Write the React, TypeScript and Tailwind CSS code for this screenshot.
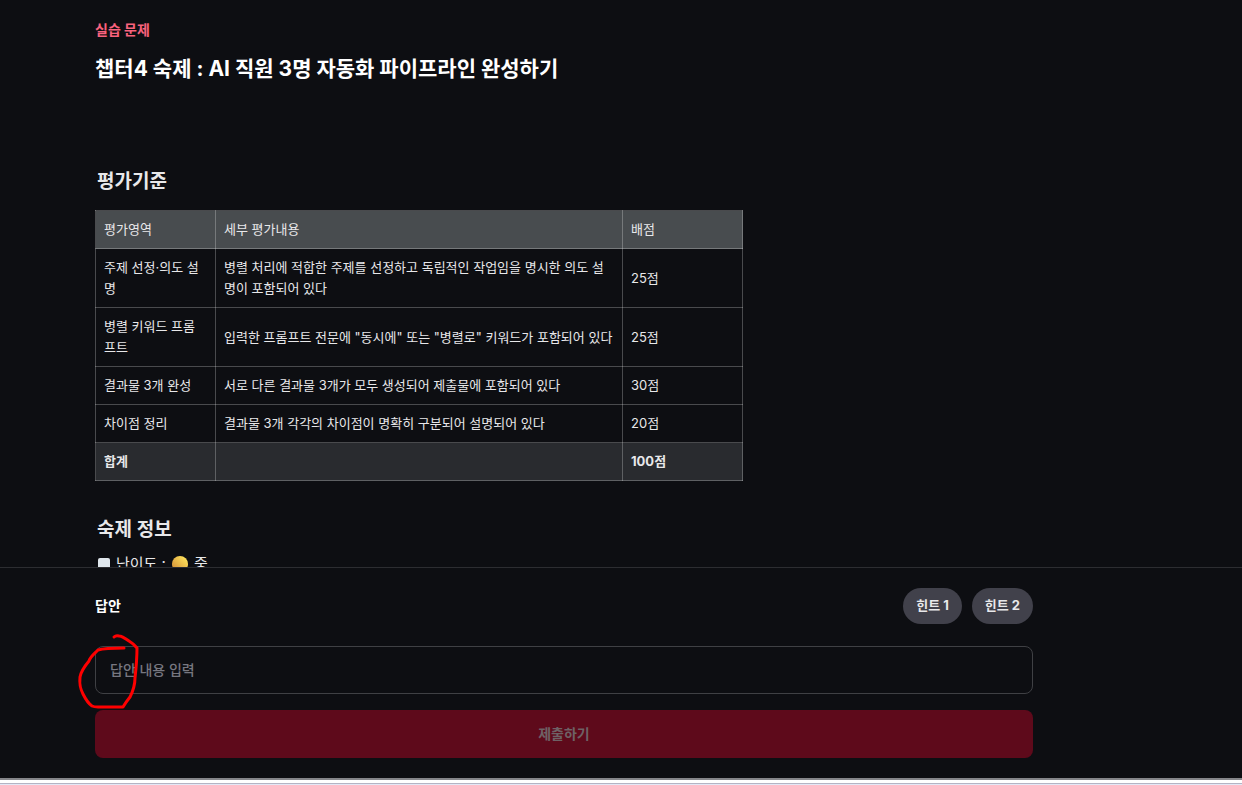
const criteria = [
  { area: "주제 선정·의도 설명", detail: "병렬 처리에 적합한 주제를 선정하고 독립적인 작업임을 명시한 의도 설명이 포함되어 있다", score: "25점" },
  { area: "병렬 키워드 프롬프트", detail: "입력한 프롬프트 전문에 \"동시에\" 또는 \"병렬로\" 키워드가 포함되어 있다", score: "25점" },
  { area: "결과물 3개 완성", detail: "서로 다른 결과물 3개가 모두 생성되어 제출물에 포함되어 있다", score: "30점" },
  { area: "차이점 정리", detail: "결과물 3개 각각의 차이점이 명확히 구분되어 설명되어 있다", score: "20점" },
];

const areaCell = "border border-white/25 py-2 pl-2 pr-3 text-left font-normal break-all";
const cell = "border border-white/25 p-2 text-left font-normal break-all";

const SquareIcon = () => (
  <svg className="w-3 h-4 shrink-0" viewBox="0 0 12 16" aria-hidden="true">
    <rect x="0" y="2" width="12" height="12" rx="2" fill="#dfe6ec" />
  </svg>
);

const YellowCircle = () => (
  <svg className="size-4 shrink-0" viewBox="0 0 16 16" aria-hidden="true">
    <defs>
      <linearGradient id="ball" x1="1" y1="0" x2="0" y2="1">
        <stop offset="0.1" stopColor="#ffe45c" />
        <stop offset="0.8" stopColor="#d99a3c" />
      </linearGradient>
    </defs>
    <circle cx="8" cy="8" r="8" fill="url(#ball)" />
  </svg>
);

const Problem = () => (
  <section className="flex-1 min-h-0 overflow-hidden pl-[95px] pr-5 pt-5">
    <p className="text-sm font-bold text-[#f9627d]">실습 문제</p>
    <h1 className="mt-3 text-[21px] leading-[34px] font-bold text-white">챕터4 숙제 : AI 직원 3명 자동화 파이프라인 완성하기</h1>

    <h2 className="mt-20 ml-0.5 text-[19px] leading-8 font-semibold">평가기준</h2>
    <table className="mt-3 w-full max-w-[648px] table-fixed border-collapse text-[13px] leading-[21px]">
      <colgroup>
        <col className="w-[120px]" />
        <col />
        <col className="w-[120px]" />
      </colgroup>
      <thead className="bg-[#484c4f]">
        <tr>
          <th className={areaCell}>평가영역</th>
          <th className={cell}>세부 평가내용</th>
          <th className={cell}>배점</th>
        </tr>
      </thead>
      <tbody>
        {criteria.map((row) => (
          <tr key={row.area}>
            <td className={areaCell}>{row.area}</td>
            <td className={cell}>{row.detail}</td>
            <td className={cell}>{row.score}</td>
          </tr>
        ))}
      </tbody>
      <tfoot className="bg-[#292b2f]">
        <tr>
          <td className={areaCell}><b>합계</b></td>
          <td className={cell}></td>
          <td className={cell}><b>100점</b></td>
        </tr>
      </tfoot>
    </table>

    <h2 className="mt-8 ml-0.5 text-[19px] leading-[34px] font-semibold">숙제 정보</h2>
    <p className="mt-[5px] ml-0.5 flex items-center gap-1.5 pl-px text-[15px] leading-6">
      <SquareIcon />
      <span>난이도 :</span>
      <YellowCircle />
      <span>중</span>
    </p>
  </section>
);

const AnswerForm = () => (
  <form className="border-t border-[#2c2d31] pl-[95px] pr-5 pt-5 pb-5" onSubmit={(e) => e.preventDefault()}>
    <div className="relative max-w-[938px]">
      <div className="flex items-center justify-between">
        <label htmlFor="answer" className="text-sm font-bold text-white">답안</label>
        <div className="flex gap-2.5">
          <button type="button" className="h-9 rounded-full bg-[#41414b] px-[13px] text-[13px] font-bold">힌트 1</button>
          <button type="button" className="h-9 rounded-full bg-[#41414b] px-[13px] text-[13px] font-bold">힌트 2</button>
        </div>
      </div>
      <input
        id="answer"
        type="text"
        placeholder="답안 내용 입력"
        className="mt-[22px] block h-12 w-full rounded-lg border border-[#3f4044] bg-transparent px-3.5 pb-0.5 text-sm font-medium placeholder:text-[#777780] outline-none"
      />
      <button type="submit" disabled className="mt-4 block h-12 w-full rounded-lg bg-[#5e0a1b] text-sm font-bold text-[#6e6165]">
        제출하기
      </button>
      {/* red pen mark around the start of the input */}
      <svg className="pointer-events-none absolute -left-[25px] top-[37px] h-[95px] w-[75px]" viewBox="70 625 75 95" fill="none" aria-hidden="true">
        <path
          d="M124 648C114 648 105 648 98 650C94 654 90 657 89 661C84 667 81 671 80 677C79 686 81 690 83 694C86 700 89 704 92 706Q94 707 98 707H123Q126 702 130 697Q135 687 135 678Q137 660 137 648Q134 644 129 641Q122 636 119 636Q116 635 114 637"
          stroke="#ff0000"
          strokeWidth="3"
          strokeLinecap="round"
          strokeLinejoin="round"
        />
      </svg>
    </div>
  </form>
);

export default function App() {
  return (
    <main className="flex h-screen flex-col bg-[#0d0e12] font-['Inter','Noto_Sans_CJK_KR',sans-serif] text-[#e8e8ea]">
      <Problem />
      <AnswerForm />
      <div className="h-[7px] shrink-0 border-t-2 border-[#85868a] bg-[#e4e8f6]">
        <div className="h-1 border-b border-[#b4b4c4] bg-white"></div>
      </div>
    </main>
  );
}
